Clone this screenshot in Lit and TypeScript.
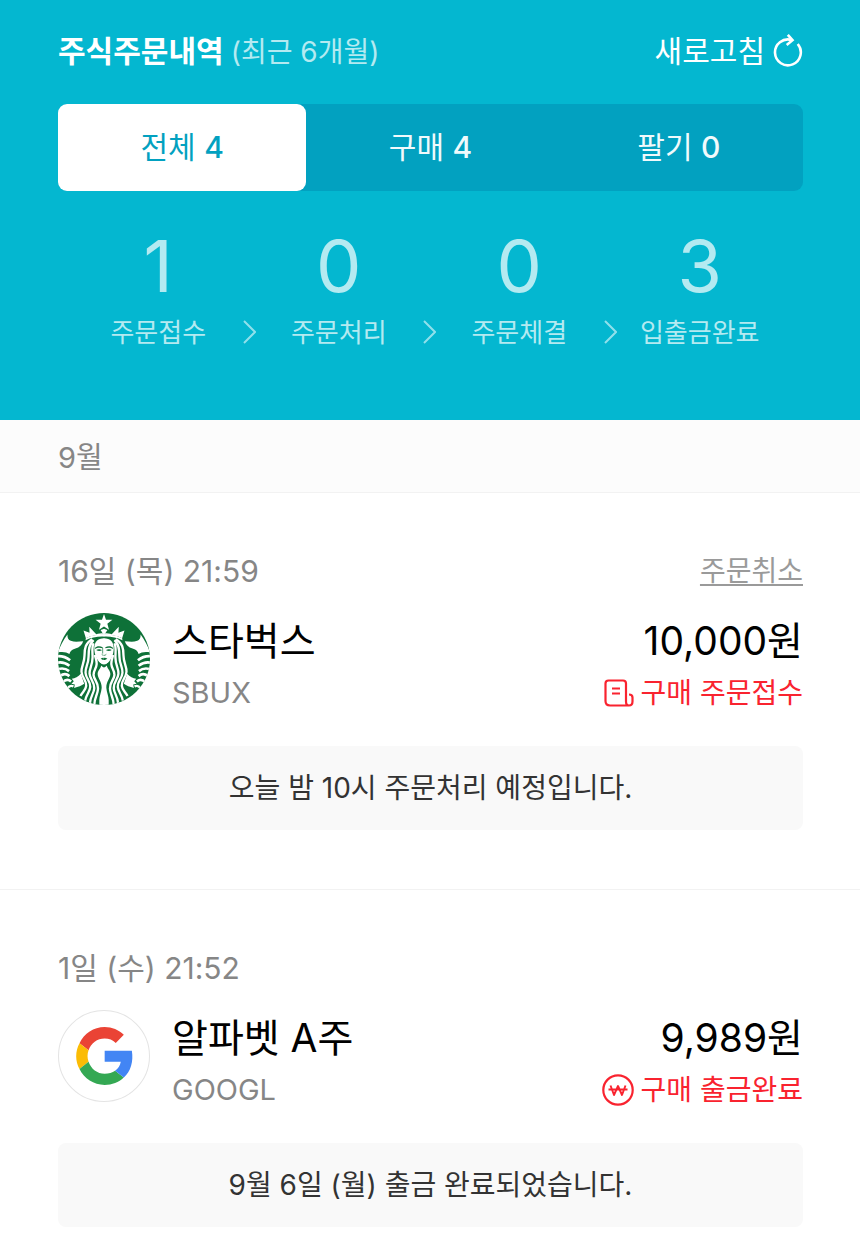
import { LitElement, html, css, svg, nothing } from "lit";
import { customElement, property, state } from "lit/decorators.js";

interface Order {
  date: string;
  name: string;
  ticker: string;
  amount: string;
  status: string;
  icon: "receipt" | "won";
  logo: "siren" | "g";
  notice: string;
  cancelable: boolean;
}

const ORDERS: Order[] = [
  {
    date: "16일 (목) 21:59",
    name: "스타벅스",
    ticker: "SBUX",
    amount: "10,000원",
    status: "구매 주문접수",
    icon: "receipt",
    logo: "siren",
    notice: "오늘 밤 10시 주문처리 예정입니다.",
    cancelable: true,
  },
  {
    date: "1일 (수) 21:52",
    name: "알파벳 A주",
    ticker: "GOOGL",
    amount: "9,989원",
    status: "구매 출금완료",
    icon: "won",
    logo: "g",
    notice: "9월 6일 (월) 출금 완료되었습니다.",
    cancelable: false,
  },
];

const TABS = [
  { label: "전체", count: 4 },
  { label: "구매", count: 4 },
  { label: "팔기", count: 0 },
];

const STEPS = [
  { count: 1, label: "주문접수" },
  { count: 0, label: "주문처리" },
  { count: 0, label: "주문체결" },
  { count: 3, label: "입출금완료" },
];

const sirenHalf = svg`
  <path fill="#fff" d="M161 83 C151 83 144 84 138 86 L117 64 L118 82 L100 75 L107 98 C122 91 142 88 161 88Z"/>
  <path fill="#fff" d="M107 98 C124 89 142 86 162 86 L162 93 C142 92 124 95 106 104Z"/>
  <path fill="#fff" d="M162 70 L151 74 L156 82 L162 86Z"/>
  <path fill="#fff" d="M24 140 C30 122 40 104 52 87 C52 98 55 104 62 106 C74 110 86 108 99 107 C96 117 88 125 76 129 C64 133 60 138 58 145 C50 140 40 137 24 140Z"/>
  <path fill="none" stroke="#fff" stroke-width="8" d="M18 152 C36 150 48 154 60 164"/>
  <path fill="none" stroke="#fff" stroke-width="8" d="M18 172 C36 167 46 171 58 180"/>
  <path fill="none" stroke="#fff" stroke-width="8" d="M22 191 C38 185 47 188 57 196"/>
  <path fill="none" stroke="#fff" stroke-width="8" d="M30 211 C42 202 50 204 58 211"/>
  <path fill="none" stroke="#fff" stroke-width="8" d="M38 229 C48 219 55 220 63 227"/>
  <path fill="none" stroke="#fff" stroke-width="7" d="M52 248 C58 239 63 238 70 242"/>
  <path fill="#fff" d="M92 204 C84 213 75 217 65 219 L71 226 L64 234 L74 236 L72 246 C85 243 94 240 102 234Z"/>
  <path fill="none" stroke="#fff" stroke-width="7" d="M126 101 C106 112 103 128 103 149 C103 172 93 181 94 198 C95 216 109 222 108 240 C107 252 97 258 91 270"/>
  <path fill="none" stroke="#fff" stroke-width="7" d="M130 104 C116 116 115 133 115 153 C115 176 105 184 106 201 C107 219 121 225 120 243 C119 258 108 265 105 284"/>
  <path fill="none" stroke="#fff" stroke-width="7" d="M130 113 C124 124 127 139 127 155 C127 179 117 187 118 204 C119 221 133 228 132 247 C131 263 120 271 119 292"/>
  <path fill="none" stroke="#fff" stroke-width="7" d="M134 148 C136 158 140 165 139 176 C138 190 129 195 130 208 C131 222 145 230 143 250 C142 267 132 275 132 298"/>
  <path fill="#fff" d="M162 98 C141 98 132 110 132 128 C132 148 142 167 153 174 C154 187 142 193 142 205 C143 219 155 229 154 246 C153 260 147 270 147 282 L147 300 L162 300Z"/>
  <path fill="#0e7138" d="M134 127 C139 121 149 121 157 125 L157 128 C149 125 140 126 134 130Z M138 133 C143 130 151 131 155 134 C149 137 143 137 138 133Z"/>
  <path fill="#0e7138" d="M162 157 C158 155 155 157 151 159 C155 161 158 163 162 163Z"/>
  <path fill="none" stroke="#0e7138" stroke-width="2" d="M154 146 L158 149 L161 149"/>
`;

const sirenLogo = svg`
  <svg class="logo" viewBox="24 23 274 274" role="img" aria-label="스타벅스">
    <defs><clipPath id="disc"><circle cx="161" cy="160" r="137"/></clipPath></defs>
    <g clip-path="url(#disc)">
      <rect x="20" y="20" width="290" height="290" fill="#0e7138"/>
      <g>${sirenHalf}</g>
      <g transform="translate(322 0) scale(-1 1)">${sirenHalf}</g>
      <path fill="#fff" d="M161 26 L167 43 L186 43 L171 55 L176 73 L161 63 L146 73 L151 55 L136 43 L155 43Z"/>
      <path fill="#0e7138" d="M146 170 C157 179 165 179 176 170 C171 180 165 185 161 185 C157 185 151 180 146 170Z"/>
      <path fill="none" stroke="#0e7138" stroke-width="2" d="M157 127 L157 144"/>
    </g>
  </svg>`;

const gLogo = svg`
  <svg class="logo" viewBox="24 23 274 274" role="img" aria-label="Google">
    <circle cx="161" cy="160" r="135.5" fill="#fff" stroke="#e4e4e4" stroke-width="3"/>
    <path fill="#ea4335" d="M88 122 C102 93 130 74 163 74 C185 74 205 83 220 97 L196 121 C187 112 176 108 163 108 C141 108 122 122 115 143Z"/>
    <path fill="#fbbc05" d="M88 122 L115 143 C111 154 111 166 115 177 L88 199 C75 175 75 146 88 122Z"/>
    <path fill="#34a853" d="M88 199 L115 177 C122 198 141 213 163 213 C175 213 186 210 194 204 L220 224 C205 238 185 246 163 246 C130 246 102 228 88 199Z"/>
    <path fill="#4285f4" d="M163 144 L244 144 C249 176 241 205 220 224 L194 204 C203 198 209 189 211 177 L163 177Z"/>
  </svg>`;

const receiptIcon = svg`
  <svg class="status-icon receipt" viewBox="0 0 30 28" aria-hidden="true" fill="none" stroke="currentColor" stroke-width="2.2">
    <path d="M6 26.5 C3 26.5 1.5 25 1.5 22 L1.5 4.5 C1.5 2.5 3 1.5 4.5 1.5 L19 1.5 C21 1.5 22 2.5 22 4.5 L22 22.5 C22 25 23 26.5 25 26.5 C27 26.5 28.5 25 28.5 22.5 L28.5 18.5 C28.5 16.5 27.5 15.5 25 15.5 M6 26.5 L25 26.5"/>
    <path d="M8 9.5 L16 9.5 M8 14.5 L16 14.5"/>
  </svg>`;

const wonIcon = svg`
  <svg class="status-icon won" viewBox="0 0 32 32" aria-hidden="true" fill="none" stroke="currentColor" stroke-width="2.2">
    <circle cx="16" cy="16" r="14.7"/>
    <path d="M8.5 11.5 L12 21 L16 12 L20 21 L23.5 11.5 M6.5 15.5 L25.5 15.5" stroke-width="1.9" stroke-linejoin="round"/>
  </svg>`;

@customElement("order-item")
class OrderItem extends LitElement {
  @property({ attribute: false }) order!: Order;

  static styles = css`
    :host {
      display: block;
      padding: 58px 57px 59px 58px;
      border-bottom: 1px solid #f2f2f2;
    }
    .top,
    .body {
      display: flex;
      justify-content: space-between;
    }
    .top {
      height: 40px;
      line-height: 40px;
      margin-bottom: 22px;
      font-size: 30px;
      color: #868686;
    }
    .cancel {
      font-size: 28px;
      color: #9a9a9a;
      text-decoration: underline;
      text-decoration-thickness: 2px;
      text-underline-offset: 3px;
    }
    .body {
      margin-bottom: 29px;
    }
    .stock {
      display: flex;
      gap: 22px;
    }
    .logo {
      width: 92px;
      height: 92px;
      flex: none;
    }
    .name,
    .amount {
      margin: 0;
      font-size: 39px;
      line-height: 56px;
      font-weight: 400;
      color: #000;
    }
    .ticker,
    .status {
      margin: 0;
      font-size: 28px;
      line-height: 48px;
    }
    .ticker {
      font-size: 29px;
      color: #868686;
    }
    .values {
      text-align: right;
    }
    .status {
      display: flex;
      align-items: center;
      justify-content: flex-end;
      gap: 7px;
      color: #f9232f;
    }
    .receipt {
      width: 30px;
      height: 28px;
    }
    .won {
      width: 32px;
      height: 32px;
    }
    .notice {
      margin: 0;
      border-radius: 8px;
      background: #f9f9f9;
      color: #333;
      font-size: 28px;
      line-height: 84px;
      text-align: center;
    }
  `;

  render() {
    const o = this.order;
    return html`
      <div class="top">
        <time>${o.date}</time>
        ${o.cancelable ? html`<a class="cancel" href="#">주문취소</a>` : nothing}
      </div>
      <div class="body">
        <div class="stock">
          ${o.logo === "siren" ? sirenLogo : gLogo}
          <div>
            <h2 class="name">${o.name}</h2>
            <p class="ticker">${o.ticker}</p>
          </div>
        </div>
        <div class="values">
          <p class="amount">${o.amount}</p>
          <p class="status">${o.icon === "receipt" ? receiptIcon : wonIcon}<span>${o.status}</span></p>
        </div>
      </div>
      <p class="notice">${o.notice}</p>
    `;
  }
}

@customElement("app-root")
class AppRoot extends LitElement {
  @state() private selected = 0;

  static styles = css`
    :host {
      display: block;
      background: #fff;
      font-family: Inter, "Noto Sans CJK KR", sans-serif;
    }
    .header {
      padding: 27px 57px 64px 58px;
      background: #04b7d0;
      color: #fff;
    }
    .title-row {
      display: flex;
      align-items: center;
      justify-content: space-between;
      height: 48px;
      margin-bottom: 29px;
    }
    .title {
      margin: 0;
      font-size: 30px;
      line-height: 48px;
      font-weight: 700;
    }
    .period {
      font-weight: 400;
      font-size: 28px;
      color: #b4eaf1;
    }
    button {
      border: 0;
      padding: 0;
      background: none;
      color: inherit;
      font: inherit;
      cursor: pointer;
    }
    .refresh {
      display: flex;
      align-items: center;
      gap: 8px;
      font-size: 30px;
      line-height: 48px;
    }
    .refresh-icon {
      width: 30px;
      height: 34px;
    }
    .tabs {
      display: grid;
      grid-template-columns: repeat(3, 1fr);
      border-radius: 9px;
      background: #02a1c0;
    }
    .tab {
      height: 87px;
      padding-bottom: 6px;
      border-radius: 9px;
      font-size: 30px;
      color: #f0fafc;
    }
    .tab-count {
      font-weight: 500;
    }
    .tab.on {
      background: #fff;
      color: #02a1c0;
    }
    .steps {
      display: flex;
      align-items: flex-end;
      margin-top: 35px;
      padding: 0 20px 0 17px;
      color: #b4eaf1;
    }
    .step {
      flex: 1 1 0;
      text-align: center;
      white-space: nowrap;
    }
    .count {
      display: block;
      font-size: 72px;
      line-height: 80px;
    }
    .label {
      display: block;
      margin-top: 4px;
      font-size: 26px;
      line-height: 46px;
    }
    .chevron {
      flex: none;
      width: 14px;
      height: 46px;
    }
    .month {
      margin: 0;
      padding: 4px 58px 0;
      border-bottom: 1px solid #f2f2f2;
      background: #fcfcfc;
      color: #868686;
      font-size: 29px;
      font-weight: 400;
      line-height: 68px;
    }
  `;

  render() {
    return html`
      <header class="header">
        <div class="title-row">
          <h1 class="title">주식주문내역 <span class="period">(최근 6개월)</span></h1>
          <button class="refresh" type="button">
            <span>새로고침</span>
            <svg class="refresh-icon" viewBox="0 0 30 34" fill="none" stroke="currentColor" stroke-width="2.6" aria-hidden="true">
              <path d="M24.7 10 A12.9 12.9 0 1 1 18.5 6" />
              <path d="M14.8 0.8 L19.5 6.2 L13.7 11" />
            </svg>
          </button>
        </div>
        <div class="tabs" role="tablist">
          ${TABS.map(
            (t, i) => html`<button
              type="button"
              role="tab"
              class="tab ${i === this.selected ? "on" : ""}"
              aria-selected=${i === this.selected}
              @click=${() => (this.selected = i)}
            >${t.label} <span class="tab-count">${t.count}</span></button>`
          )}
        </div>
        <div class="steps">
          ${STEPS.map(
            (s, i) => html`
              ${i > 0
                ? html`<svg class="chevron" viewBox="0 0 14 46" fill="none" stroke="currentColor" stroke-width="2" stroke-opacity="0.8" aria-hidden="true">
                    <path d="M2 11 L13 22 L2 33" />
                  </svg>`
                : nothing}
              <div class="step"><span class="count">${s.count}</span><span class="label">${s.label}</span></div>
            `
          )}
        </div>
      </header>
      <main>
        <h2 class="month">9월</h2>
        ${ORDERS.map((o) => html`<order-item .order=${o}></order-item>`)}
      </main>
    `;
  }
}
